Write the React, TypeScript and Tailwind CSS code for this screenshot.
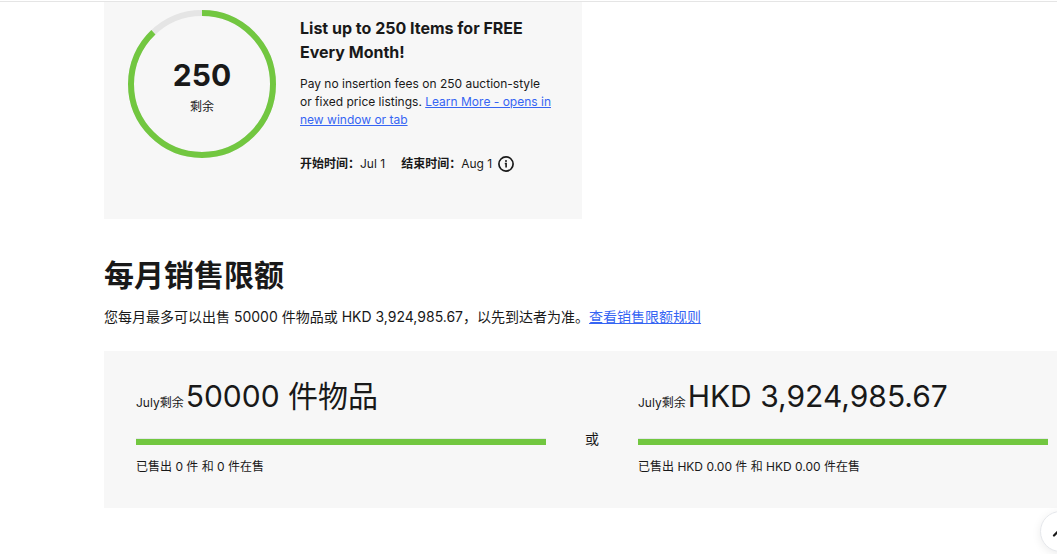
import { ChevronUp } from "lucide-react";

interface LimitProps {
  label: string;
  amount: string;
  sold: string;
}

function Limit({ label, amount, sold }: LimitProps) {
  return (
    <div className="min-w-0 flex-1">
      <div className="flex h-10 items-baseline gap-0.5 whitespace-nowrap">
        <span className="text-xs">{label}</span>
        <span className="text-3xl leading-10">{amount}</span>
      </div>
      <div className="mt-[22px] h-[7px] border-t border-gray-200 bg-[#72c740]" />
      <div className="mt-3 text-xs leading-5">{sold}</div>
    </div>
  );
}

function Ring() {
  return (
    <div className="relative size-[148px] shrink-0">
      <svg viewBox="0 0 148 148" className="size-full -rotate-90" fill="none">
        <circle cx="74" cy="74" r="71" stroke="#e5e5e5" strokeWidth="6" />
        <circle
          cx="74"
          cy="74"
          r="71"
          stroke="#72c740"
          strokeWidth="6"
          pathLength="100"
          strokeDasharray="88 12"
        />
      </svg>
      <div className="absolute inset-0 flex flex-col items-center justify-center gap-0.5 pt-1">
        <span className="text-3xl font-bold leading-10">250</span>
        <span className="text-xs leading-5">剩余</span>
      </div>
    </div>
  );
}

export default function App() {
  return (
    <main className="min-h-screen overflow-hidden bg-white pt-px font-['Inter','Noto_Sans_CJK_SC',sans-serif] text-[#191919]">
      <div className="border-t border-[#e5e5e5] pl-[104px]">
        <section className="flex w-full max-w-[478px] gap-6 bg-[#f7f7f7] px-6 pb-[43px] pt-2">
          <Ring />
          <div className="min-w-0 flex-1 pt-1.5">
            <h3 className="whitespace-nowrap text-base font-bold leading-6">
              List up to 250 Items for FREE
              <br />
              Every Month!
            </h3>
            <p className="mt-[11px] whitespace-nowrap text-xs leading-[18px]">
              Pay no insertion fees on 250 auction-style
              <br />
              or fixed price listings.{" "}
              <a href="#more" className="text-[#3665f3] underline">
                Learn More - opens in
                <br />
                new window or tab
              </a>
            </p>
            <div className="mt-[25px] flex items-center whitespace-nowrap pb-0.5 text-xs leading-5">
              <b>开始时间：</b>
              <span className="mr-4">Jul 1</span>
              <b>结束时间：</b>
              <span className="mr-1.5">Aug 1</span>
              <button type="button" aria-label="详情">
                <svg viewBox="0 0 16 16" className="size-4" fill="none">
                  <circle cx="8" cy="8" r="7.1" stroke="#191919" strokeWidth="1.7" />
                  <circle cx="8" cy="4.9" r="1" fill="#191919" />
                  <path d="M6.8 7.5H8.1V11.6" stroke="#191919" strokeWidth="1.6" />
                </svg>
              </button>
            </div>
          </div>
        </section>

        <h2 className="mt-9 text-3xl font-bold leading-10">每月销售限额</h2>
        <p className="mt-3 text-sm leading-5">
          您每月最多可以出售 50000 件物品或 HKD 3,924,985.67，以先到达者为准。
          <a href="#rules" className="text-[#3665f3] underline">
            查看销售限额规则
          </a>
        </p>

        <section className="mt-6 flex bg-[#f7f7f7] pb-[31px] pl-8 pr-[9px] pt-[25px]">
          <Limit label="July剩余" amount="50000 件物品" sold="已售出 0 件 和 0 件在售" />
          <div className="w-[92px] shrink-0 pt-[53px] text-center text-sm leading-5">或</div>
          <Limit
            label="July剩余"
            amount="HKD 3,924,985.67"
            sold="已售出 HKD 0.00 件 和 HKD 0.00 件在售"
          />
        </section>
      </div>

      <button
        type="button"
        aria-label="返回顶部"
        className="fixed -right-6 bottom-0.5 flex size-[41px] items-center justify-center rounded-full border border-gray-200 bg-white shadow-[0_2px_10px_rgba(0,0,0,0.08)]"
      >
        <ChevronUp className="size-7" strokeWidth={2} />
      </button>
    </main>
  );
}
